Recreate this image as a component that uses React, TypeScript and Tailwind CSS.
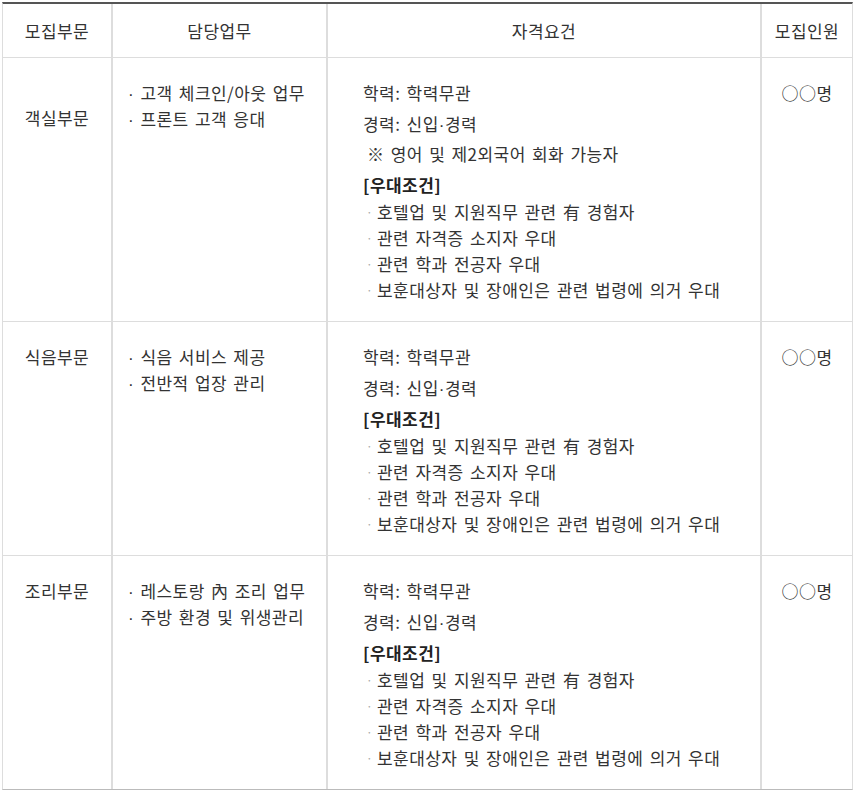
const font = { fontFamily: '"Noto Sans CJK KR", "Noto Sans", sans-serif' }
const latin = { fontFamily: '"Liberation Sans", sans-serif' }

type Row = {
  part: string
  partPad: string
  duties: string[]
  extra?: string
}

const perks = [
  "호텔업 및 지원직무 관련 有 경험자",
  "관련 자격증 소지자 우대",
  "관련 학과 전공자 우대",
  "보훈대상자 및 장애인은 관련 법령에 의거 우대",
]

const rows: Row[] = [
  {
    part: "객실부문",
    partPad: "pt-[47px]",
    duties: ["고객 체크인/아웃 업무", "프론트 고객 응대"],
    extra: "※ 영어 및 제2외국어 회화 가능자",
  },
  {
    part: "식음부문",
    partPad: "pt-[22px]",
    duties: ["식음 서비스 제공", "전반적 업장 관리"],
  },
  {
    part: "조리부문",
    partPad: "pt-[22px]",
    duties: ["레스토랑 內 조리 업무", "주방 환경 및 위생관리"],
  },
]

function Line({ children, className = "" }: { children: React.ReactNode; className?: string }) {
  return <div className={`h-[26px] leading-[26px] whitespace-nowrap ${className}`}>{children}</div>
}

export default function App() {
  return (
    <div
      className="bg-white min-h-screen pt-[2px] pl-[2px] text-[17px] tracking-[0.45px] [word-spacing:2px] text-[#333]"
      style={font}
    >
      <div className="w-[851px] border-t-2 border-t-[#555] border-x border-x-[#ddd] border-b border-b-[#bbb]">
        <div className="grid grid-cols-[110px_215px_434px_90px] h-[54px] border-b border-b-[#ddd] items-stretch">
          <div className="flex items-center justify-center border-r-2 border-r-[#ddd]">모집부문</div>
          <div className="flex items-center justify-center border-r-2 border-r-[#ddd]">담당업무</div>
          <div className="flex items-center justify-center border-r-2 border-r-[#ddd]">자격요건</div>
          <div className="flex items-center justify-center">모집인원</div>
        </div>
        {rows.map((r, i) => (
          <div
            key={r.part}
            className={`grid grid-cols-[110px_215px_434px_90px] ${i < rows.length - 1 ? "border-b border-b-[#ddd]" : ""}`}
          >
            <div className={`border-r-2 border-r-[#ddd] text-center ${r.partPad}`}>
              <Line>{r.part}</Line>
            </div>
            <div className="border-r-2 border-r-[#ddd] pt-[22px] pl-[15px]">
              {r.duties.map((d) => (
                <Line key={d}>
                  <span style={latin} className="tracking-normal">
                    ·{" "}
                  </span>
                  {d}
                </Line>
              ))}
            </div>
            <div className="border-r-2 border-r-[#ddd] pt-[22px] pb-[18px] pl-[35px]">
              <Line>학력: 학력무관</Line>
              <Line className="mt-[5px]">
                경력: 신입<span style={latin}>·</span>경력
              </Line>
              {r.extra && <Line className="mt-[4px] pl-[4px]">{r.extra}</Line>}
              <Line className="mt-[5px] font-bold text-[#222]">[우대조건]</Line>
              <div className="mt-[1px]">
                {perks.map((p) => (
                  <Line key={p} className="flex items-center">
                    <span className="text-[#aaa] text-[12px] w-[14px] pl-[3px]">·</span>
                    {p}
                  </Line>
                ))}
              </div>
            </div>
            <div className="pt-[22px] text-center">
              <Line>○○명</Line>
            </div>
          </div>
        ))}
      </div>
    </div>
  )
}
